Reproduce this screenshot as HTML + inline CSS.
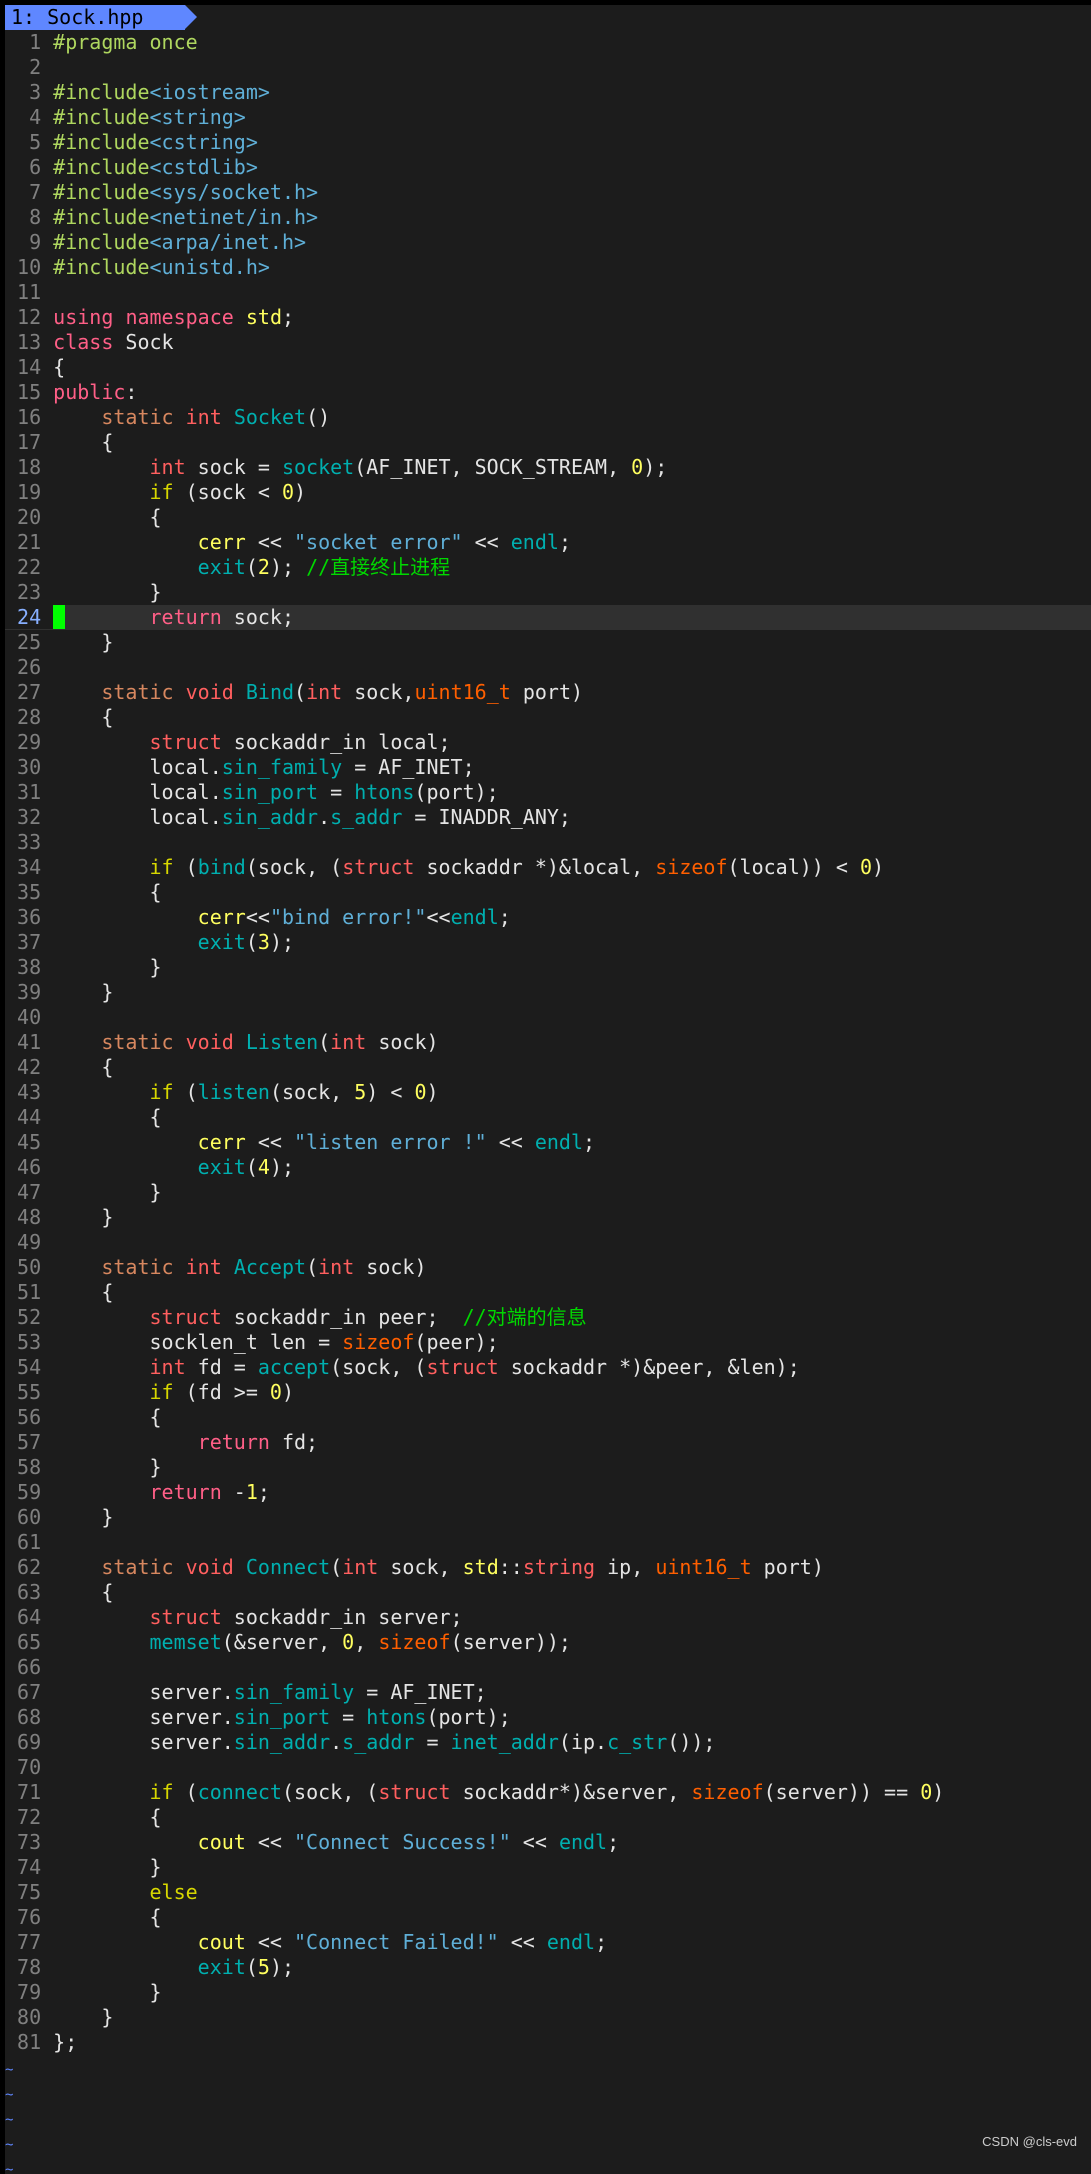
<!DOCTYPE html>
<html><head><meta charset="utf-8"><style>
html,body{margin:0;padding:0;background:#000;}
#w{position:absolute;left:5px;top:5px;width:1086px;height:2169px;background:#1c1c1c;overflow:hidden;}
#tab{position:absolute;left:0;top:0;height:25px;width:180px;background:#5f87ff;color:#000;font:20px/25px "DejaVu Sans Mono","Liberation Mono",monospace;padding-left:6px;box-sizing:border-box;}
#tab:after{content:"";position:absolute;right:-12px;top:0;border-left:12px solid #5f87ff;border-top:12.5px solid transparent;border-bottom:12.5px solid transparent;}
pre{position:absolute;left:0;top:25px;margin:0;font:20px/25px "DejaVu Sans Mono","Liberation Mono","Noto Sans CJK SC",monospace;color:#e4e4e4;white-space:pre;width:1086px;}
.l{display:block;height:25px;}
.ln{color:#808080;}
.cur{background:#303030;}
.cur .ln{color:#87afff;background:#1c1c1c;}
.g{background:#00ff00;}
.k{color:#ff5f87}.t{color:#ff5f5f}.s{color:#d7875f}.f{color:#00afaf}.n{color:#ffff5f}
.y{color:#ffff5f}.i{color:#d7d700}.str{color:#5fafd7}.c{color:#00d700;font-family:"DejaVu Sans Mono","Noto Sans CJK SC",monospace}
.o{color:#ff5f00}.p{color:#afd75f}.inc{color:#5fafd7}.td{color:#5f87ff;font-size:14px}
#wm{position:absolute;right:14px;top:2129px;color:#ccc;font:13px "Liberation Sans",sans-serif;}
</style></head><body><div id="w">
<div id="tab">1: Sock.hpp</div>
<pre><span class="l"><span class="ln">  1 </span><span class="p">#pragma once</span></span><span class="l"><span class="ln">  2 </span></span><span class="l"><span class="ln">  3 </span><span class="p">#include</span><span class="inc">&lt;iostream&gt;</span></span><span class="l"><span class="ln">  4 </span><span class="p">#include</span><span class="inc">&lt;string&gt;</span></span><span class="l"><span class="ln">  5 </span><span class="p">#include</span><span class="inc">&lt;cstring&gt;</span></span><span class="l"><span class="ln">  6 </span><span class="p">#include</span><span class="inc">&lt;cstdlib&gt;</span></span><span class="l"><span class="ln">  7 </span><span class="p">#include</span><span class="inc">&lt;sys/socket.h&gt;</span></span><span class="l"><span class="ln">  8 </span><span class="p">#include</span><span class="inc">&lt;netinet/in.h&gt;</span></span><span class="l"><span class="ln">  9 </span><span class="p">#include</span><span class="inc">&lt;arpa/inet.h&gt;</span></span><span class="l"><span class="ln"> 10 </span><span class="p">#include</span><span class="inc">&lt;unistd.h&gt;</span></span><span class="l"><span class="ln"> 11 </span></span><span class="l"><span class="ln"> 12 </span><span class="k">using</span> <span class="k">namespace</span> <span class="y">std</span>;</span><span class="l"><span class="ln"> 13 </span><span class="k">class</span> Sock</span><span class="l"><span class="ln"> 14 </span>{</span><span class="l"><span class="ln"> 15 </span><span class="k">public</span>:</span><span class="l"><span class="ln"> 16 </span>    <span class="s">static</span> <span class="t">int</span> <span class="f">Socket</span>()</span><span class="l"><span class="ln"> 17 </span>    {</span><span class="l"><span class="ln"> 18 </span>        <span class="t">int</span> sock = <span class="f">socket</span>(AF_INET, SOCK_STREAM, <span class="n">0</span>);</span><span class="l"><span class="ln"> 19 </span>        <span class="i">if</span> (sock &lt; <span class="n">0</span>)</span><span class="l"><span class="ln"> 20 </span>        {</span><span class="l"><span class="ln"> 21 </span>            <span class="y">cerr</span> &lt;&lt; <span class="str">"socket error"</span> &lt;&lt; <span class="f">endl</span>;</span><span class="l"><span class="ln"> 22 </span>            <span class="f">exit</span>(<span class="n">2</span>); <span class="c">//直接终止进程</span></span><span class="l"><span class="ln"> 23 </span>        }</span><span class="l cur"><span class="ln"> 24 </span><span class="g"> </span>       <span class="k">return</span> sock;</span><span class="l"><span class="ln"> 25 </span>    }</span><span class="l"><span class="ln"> 26 </span></span><span class="l"><span class="ln"> 27 </span>    <span class="s">static</span> <span class="t">void</span> <span class="f">Bind</span>(<span class="t">int</span> sock,<span class="o">uint16_t</span> port)</span><span class="l"><span class="ln"> 28 </span>    {</span><span class="l"><span class="ln"> 29 </span>        <span class="t">struct</span> sockaddr_in local;</span><span class="l"><span class="ln"> 30 </span>        local.<span class="f">sin_family</span> = AF_INET;</span><span class="l"><span class="ln"> 31 </span>        local.<span class="f">sin_port</span> = <span class="f">htons</span>(port);</span><span class="l"><span class="ln"> 32 </span>        local.<span class="f">sin_addr</span>.<span class="f">s_addr</span> = INADDR_ANY;</span><span class="l"><span class="ln"> 33 </span></span><span class="l"><span class="ln"> 34 </span>        <span class="i">if</span> (<span class="f">bind</span>(sock, (<span class="t">struct</span> sockaddr *)&amp;local, <span class="o">sizeof</span>(local)) &lt; <span class="n">0</span>)</span><span class="l"><span class="ln"> 35 </span>        {</span><span class="l"><span class="ln"> 36 </span>            <span class="y">cerr</span>&lt;&lt;<span class="str">"bind error!"</span>&lt;&lt;<span class="f">endl</span>;</span><span class="l"><span class="ln"> 37 </span>            <span class="f">exit</span>(<span class="n">3</span>);</span><span class="l"><span class="ln"> 38 </span>        }</span><span class="l"><span class="ln"> 39 </span>    }</span><span class="l"><span class="ln"> 40 </span></span><span class="l"><span class="ln"> 41 </span>    <span class="s">static</span> <span class="t">void</span> <span class="f">Listen</span>(<span class="t">int</span> sock)</span><span class="l"><span class="ln"> 42 </span>    {</span><span class="l"><span class="ln"> 43 </span>        <span class="i">if</span> (<span class="f">listen</span>(sock, <span class="n">5</span>) &lt; <span class="n">0</span>)</span><span class="l"><span class="ln"> 44 </span>        {</span><span class="l"><span class="ln"> 45 </span>            <span class="y">cerr</span> &lt;&lt; <span class="str">"listen error !"</span> &lt;&lt; <span class="f">endl</span>;</span><span class="l"><span class="ln"> 46 </span>            <span class="f">exit</span>(<span class="n">4</span>);</span><span class="l"><span class="ln"> 47 </span>        }</span><span class="l"><span class="ln"> 48 </span>    }</span><span class="l"><span class="ln"> 49 </span></span><span class="l"><span class="ln"> 50 </span>    <span class="s">static</span> <span class="t">int</span> <span class="f">Accept</span>(<span class="t">int</span> sock)</span><span class="l"><span class="ln"> 51 </span>    {</span><span class="l"><span class="ln"> 52 </span>        <span class="t">struct</span> sockaddr_in peer;  <span class="c">//对端的信息</span></span><span class="l"><span class="ln"> 53 </span>        socklen_t len = <span class="o">sizeof</span>(peer);</span><span class="l"><span class="ln"> 54 </span>        <span class="t">int</span> fd = <span class="f">accept</span>(sock, (<span class="t">struct</span> sockaddr *)&amp;peer, &amp;len);</span><span class="l"><span class="ln"> 55 </span>        <span class="i">if</span> (fd &gt;= <span class="n">0</span>)</span><span class="l"><span class="ln"> 56 </span>        {</span><span class="l"><span class="ln"> 57 </span>            <span class="k">return</span> fd;</span><span class="l"><span class="ln"> 58 </span>        }</span><span class="l"><span class="ln"> 59 </span>        <span class="k">return</span> -<span class="n">1</span>;</span><span class="l"><span class="ln"> 60 </span>    }</span><span class="l"><span class="ln"> 61 </span></span><span class="l"><span class="ln"> 62 </span>    <span class="s">static</span> <span class="t">void</span> <span class="f">Connect</span>(<span class="t">int</span> sock, <span class="y">std</span>::<span class="t">string</span> ip, <span class="o">uint16_t</span> port)</span><span class="l"><span class="ln"> 63 </span>    {</span><span class="l"><span class="ln"> 64 </span>        <span class="t">struct</span> sockaddr_in server;</span><span class="l"><span class="ln"> 65 </span>        <span class="f">memset</span>(&amp;server, <span class="n">0</span>, <span class="o">sizeof</span>(server));</span><span class="l"><span class="ln"> 66 </span></span><span class="l"><span class="ln"> 67 </span>        server.<span class="f">sin_family</span> = AF_INET;</span><span class="l"><span class="ln"> 68 </span>        server.<span class="f">sin_port</span> = <span class="f">htons</span>(port);</span><span class="l"><span class="ln"> 69 </span>        server.<span class="f">sin_addr</span>.<span class="f">s_addr</span> = <span class="f">inet_addr</span>(ip.<span class="f">c_str</span>());</span><span class="l"><span class="ln"> 70 </span></span><span class="l"><span class="ln"> 71 </span>        <span class="i">if</span> (<span class="f">connect</span>(sock, (<span class="t">struct</span> sockaddr*)&amp;server, <span class="o">sizeof</span>(server)) == <span class="n">0</span>)</span><span class="l"><span class="ln"> 72 </span>        {</span><span class="l"><span class="ln"> 73 </span>            <span class="y">cout</span> &lt;&lt; <span class="str">"Connect Success!"</span> &lt;&lt; <span class="f">endl</span>;</span><span class="l"><span class="ln"> 74 </span>        }</span><span class="l"><span class="ln"> 75 </span>        <span class="i">else</span></span><span class="l"><span class="ln"> 76 </span>        {</span><span class="l"><span class="ln"> 77 </span>            <span class="y">cout</span> &lt;&lt; <span class="str">"Connect Failed!"</span> &lt;&lt; <span class="f">endl</span>;</span><span class="l"><span class="ln"> 78 </span>            <span class="f">exit</span>(<span class="n">5</span>);</span><span class="l"><span class="ln"> 79 </span>        }</span><span class="l"><span class="ln"> 80 </span>    }</span><span class="l"><span class="ln"> 81 </span>};</span><span class="l"><span class="td">~</span></span><span class="l"><span class="td">~</span></span><span class="l"><span class="td">~</span></span><span class="l"><span class="td">~</span></span><span class="l"><span class="td">~</span></span></pre>
<div id="wm">CSDN @cls-evd</div>
</div></body></html>
